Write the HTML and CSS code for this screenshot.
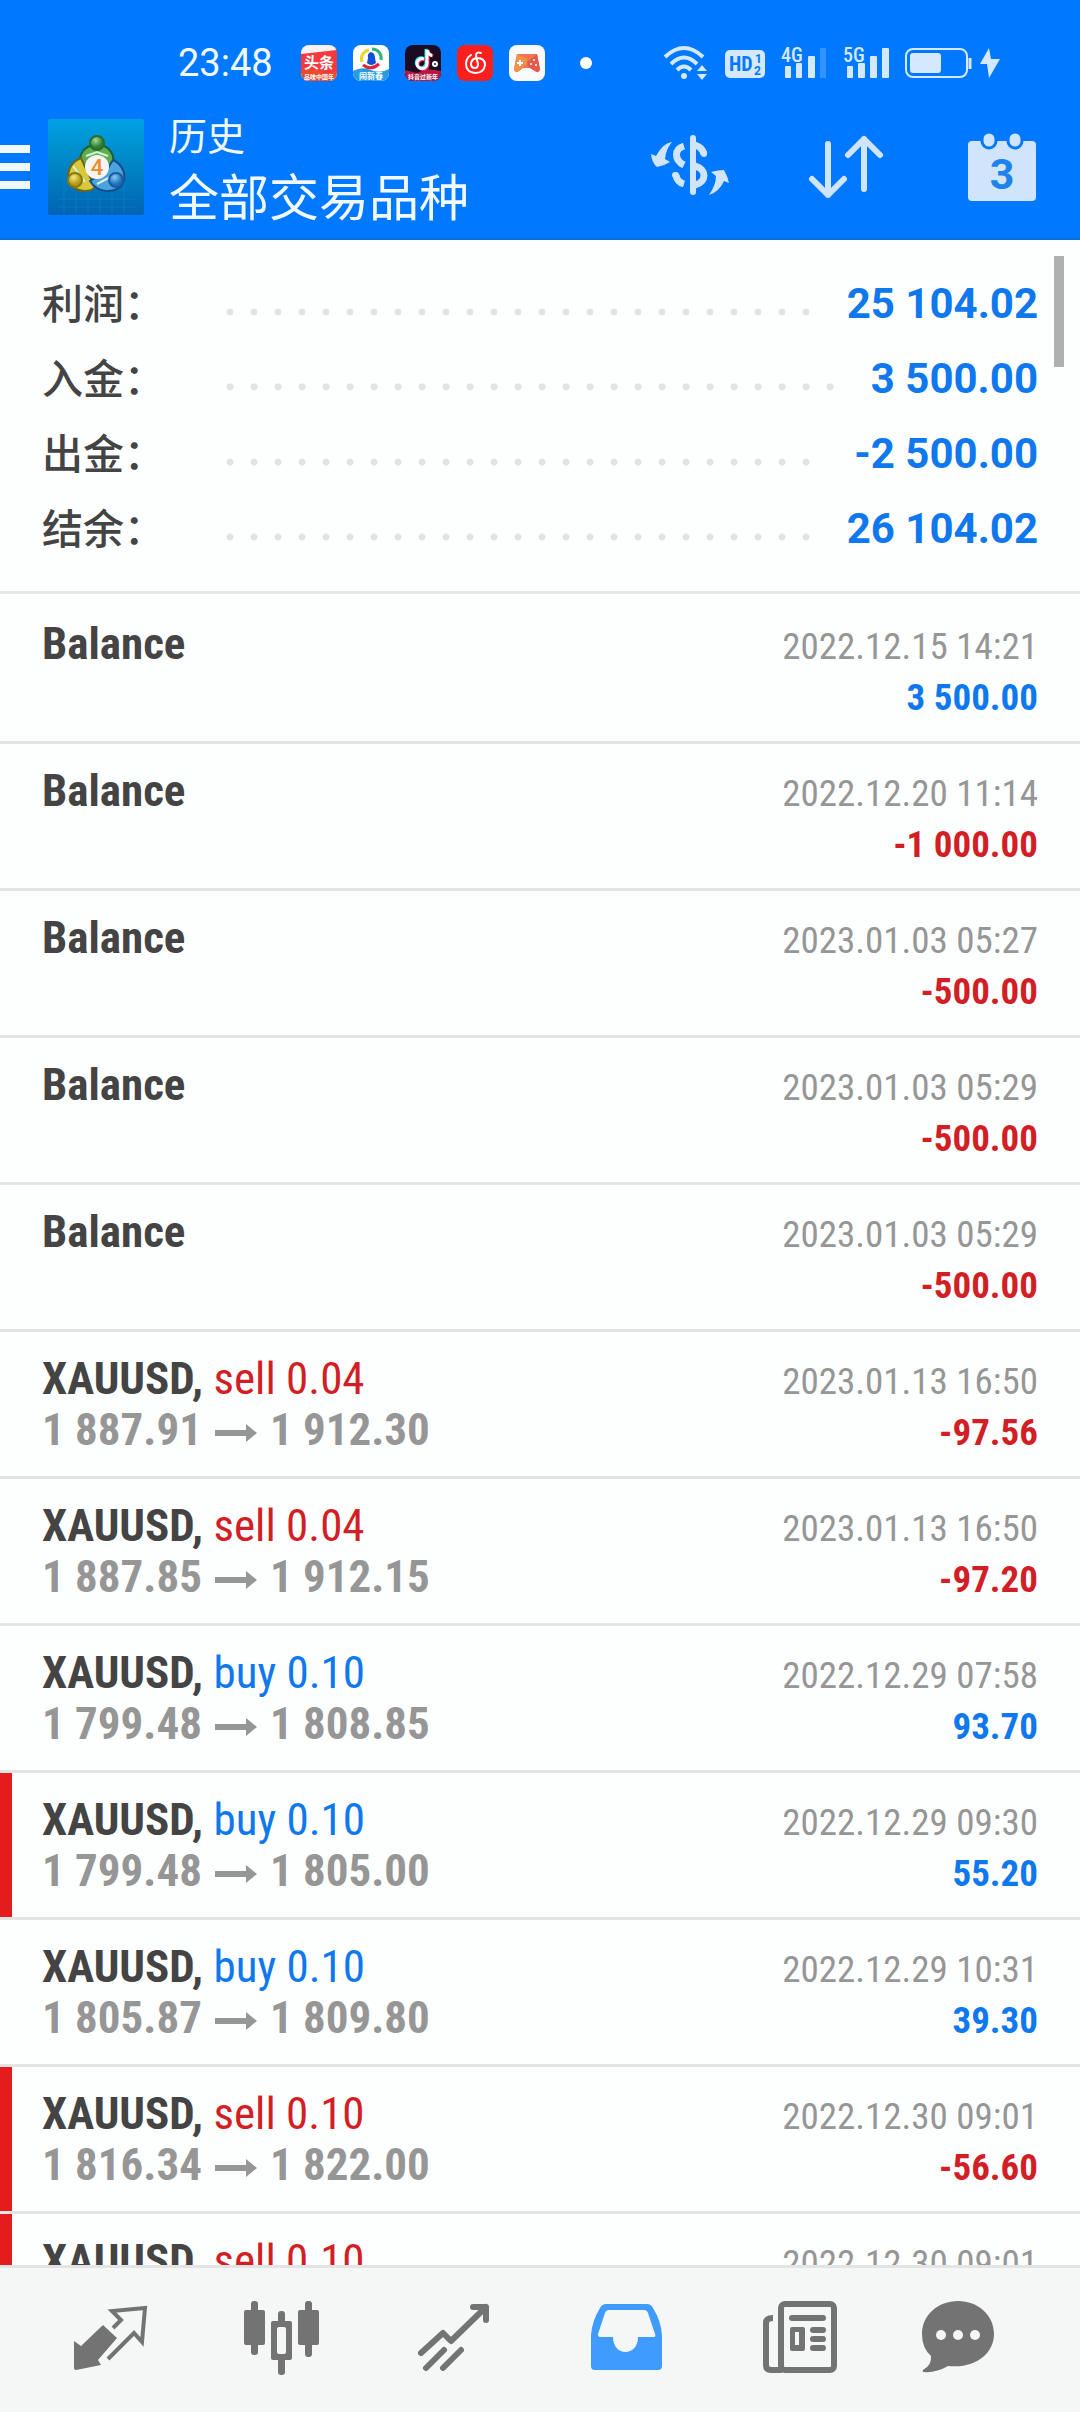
FILE: index.html
```html
<!DOCTYPE html>
<html lang="zh-CN">
<head>
<meta charset="utf-8">
<meta name="viewport" content="width=device-width, initial-scale=1">
<title>历史</title>
<link rel="stylesheet" href="styles.css">
</head>
<body>
<header class="top">
  <div class="status">
    <time class="clock">23:48</time>
    <div class="apps">
      <svg class="app" viewBox="0 0 36 36" aria-hidden="true"><rect width="36" height="36" rx="8" fill="#f8f2f4"/><path d="M0 9L36 5V28H0Z" fill="#f5393f"/><path d="M0 26Q9 22 18 26T36 26V28A8 8 0 0 1 28 36H8A8 8 0 0 1 0 28Z" fill="#ee4a2c"/><text x="18" y="23" class="app-name">头条</text><text x="18" y="34" class="app-note">品味中国年</text></svg>
      <svg class="app" viewBox="0 0 36 36" aria-hidden="true"><rect width="36" height="36" rx="8" fill="#fff"/><path d="M0 26Q9 21 18 25T36 24V28A8 8 0 0 1 28 36H8A8 8 0 0 1 0 28Z" fill="#2b9be0"/><g fill="none" stroke-width="3"><path d="M9 17A9 9 0 0 1 16 5" stroke="#e8d62c"/><path d="M19 4A9 9 0 0 1 28 15" stroke="#2fb67c"/><path d="M10 20Q18 26 26 19" stroke="#e0263c"/></g><path d="M18 7Q22 8 22 13L23 18Q18 22 14 18L15 13Q14 8 18 7Z" fill="#1151d8"/><text x="18" y="34" class="app-note app-note-big">闹新春</text></svg>
      <svg class="app" viewBox="0 0 36 36" aria-hidden="true"><rect width="36" height="36" rx="8" fill="#1b0c24"/><path d="M0 25L12 28 22 24 36 26V28A8 8 0 0 1 28 36H8A8 8 0 0 1 0 28Z" fill="#b51745"/><g fill="none" stroke-width="3"><path d="M18 13A5 5 0 1 0 21 19V4Q22 9 27 10" stroke="#28e6e4"/><path d="M20 15A5 5 0 1 0 23 20V5Q24 10 28 11" stroke="#f52f5a"/><path d="M19 14A5 5 0 1 0 22 19V5Q23 9 27 11" stroke="#fff"/></g><circle cx="30" cy="19" r="2" fill="none" stroke="#fff" stroke-width="2"/><text x="18" y="34" class="app-note">抖音过新年</text></svg>
      <svg class="app" viewBox="0 0 36 36" aria-hidden="true"><rect width="36" height="36" rx="8" fill="#fb201c"/><path d="M24 8Q19 6 19 11L21 19Q21 23 18 23 14 23 14 19 14 14 20 13 28 13 28 20 27 28 18 28 9 27 9 19 9 13 14 10" fill="none" stroke="#fff" stroke-width="2" stroke-linecap="round"/></svg>
      <svg class="app" viewBox="0 0 36 36" aria-hidden="true"><rect width="36" height="36" rx="8" fill="#fbfafc"/><path d="M8 9H28L31 24Q30 29 26 26L22 23H14L10 26Q6 29 5 24Z" fill="#ef7650"/><path d="M18 14L8 9 5 24Q6 29 10 26L18 18Z" fill="#f0924b"/><path d="M18 17L28 9 31 24Q30 29 26 26L19 22Z" fill="#e35a4b"/><path d="M11 15V21M8 18H14" stroke="#fff" stroke-width="2"/><g fill="#fff"><circle cx="25" cy="15" r="1"/><circle cx="22" cy="19" r="1"/><circle cx="27" cy="20" r="1"/></g></svg>
    </div>
    <span class="more"></span>
    <div class="system">
      <svg width="46" height="36" viewBox="0 0 46 36" aria-hidden="true"><g fill="none" stroke="#d4e9ff" stroke-width="4"><path d="M2 12Q21-6 40 12"/><path d="M8 19Q21 6 34 19"/><path d="M14 25Q21 18 28 25"/></g><circle cx="21" cy="31" r="3" fill="#d4e9ff"/><path d="M34 26L39 20 44 26ZM34 29H44L39 35Z" fill="#d4e9ff"/></svg>
      <svg width="40" height="36" viewBox="0 0 40 36" aria-hidden="true"><rect y="5" width="40" height="28" rx="5" fill="#d4e9ff"/><text x="4" y="26" class="hd">HD</text><text x="30" y="18" class="hd-small">1</text><text x="29" y="30" class="hd-small">2</text></svg>
      <svg width="46" height="36" viewBox="0 0 46 36" aria-hidden="true"><text x="0" y="17" class="net">4G</text><g fill="#d4e9ff"><rect x="4" y="21" width="6" height="12" rx="1"/><rect x="15" y="18" width="6" height="15" rx="1"/><rect x="27" y="11" width="7" height="22" rx="1"/></g><rect x="39" y="3" width="6" height="30" rx="1" fill="#3394ff"/></svg>
      <svg width="46" height="36" viewBox="0 0 46 36" aria-hidden="true"><text x="0" y="17" class="net">5G</text><g fill="#d4e9ff"><rect x="4" y="21" width="6" height="12" rx="1"/><rect x="15" y="18" width="7" height="15" rx="1"/><rect x="27" y="11" width="7" height="22" rx="1"/><rect x="39" y="3" width="7" height="30" rx="1"/></g></svg>
      <svg width="95" height="36" viewBox="0 0 95 36" aria-hidden="true"><rect x="1" y="4" width="61" height="28" rx="7" fill="none" stroke="#d4e9ff" stroke-width="2"/><rect x="5" y="8" width="31" height="20" rx="3" fill="#d4e9ff"/><path d="M65 13V24" stroke="#d4e9ff" stroke-width="3"/><path d="M84 3L75 19H82L84 33 95 14H86Z" fill="#d4e9ff"/></svg>
    </div>
  </div>
  <div class="bar">
    <button class="menu" aria-label="菜单"><svg width="30" height="44" viewBox="0 0 30 44"><path d="M0 4H30M0 22H30M0 40H30" stroke="#f2f8ff" stroke-width="8"/></svg></button>
    <svg class="logo" viewBox="0 0 96 96" role="img" aria-label="MetaTrader 4">
      <defs>
        <linearGradient id="sky" x1="0" y1="0" x2="0" y2="1"><stop offset="0" stop-color="#00a2e4"/><stop offset=".5" stop-color="#0084c4"/><stop offset="1" stop-color="#0063b4"/></linearGradient>
        <radialGradient id="green" cx=".4" cy=".3"><stop offset="0" stop-color="#a5dc92"/><stop offset="1" stop-color="#2c7d34"/></radialGradient>
        <radialGradient id="gold" cx=".4" cy=".3"><stop offset="0" stop-color="#f6ea7c"/><stop offset="1" stop-color="#b59a16"/></radialGradient>
        <radialGradient id="blue" cx=".4" cy=".3"><stop offset="0" stop-color="#8ccaf5"/><stop offset="1" stop-color="#1d72bd"/></radialGradient>
      </defs>
      <rect width="96" height="96" rx="2" fill="url(#sky)"/>
      <path d="M16 60V94M28 70V94M40 76V94M52 76V94M64 72V94M76 60V94M10 80H88M10 88H88" stroke="#2c93d2" stroke-width="1" opacity=".3"/>
      <g stroke-width="2">
        <path d="M33 50C29 34 37 26 49 26S69 36 64 50L49 56Z" fill="#5cae50" stroke="#235f2a"/>
        <path d="M33 39C20 44 18 56 23 66 30 74 43 73 47 68L38 50Z" fill="#d8c93c" stroke="#73650f"/>
        <path d="M65 41C76 46 79 58 74 66 66 75 49 74 42 62L58 52Z" fill="#4ba3df" stroke="#134f8b"/>
        <path d="M38 37L49 33 60 37M25 47L37 63M49 65L66 56" stroke="#d7f0da" fill="none"/>
        <circle cx="49" cy="24" r="7" fill="url(#green)" stroke="#2a6c2e"/>
        <circle cx="27" cy="61" r="7" fill="url(#gold)" stroke="#8a7712"/>
        <circle cx="68" cy="61" r="7" fill="url(#blue)" stroke="#1a5c9c"/>
      </g>
      <circle cx="49" cy="48" r="12" fill="#f5f5f4"/>
      <text x="49" y="56" class="logo-four">4</text>
    </svg>
    <div class="titles"><p class="section">历史</p><h1 class="scope">全部交易品种</h1></div>
    <div class="actions">
      <button class="action" aria-label="货币"><svg viewBox="0 0 84 84"><g fill="none" stroke="#d0e5fb"><path d="M45 13V67" stroke-width="6" stroke-linecap="round"/><path d="M36 21C26 24 26 35 36 40M28 50Q29 57 36 59M47 20Q54 22 56 29M47 41C59 44 59 57 47 60" stroke-width="7"/><path d="M27 50H28M56 28V29" stroke-width="6" stroke-linecap="round"/></g><path d="M24 17Q15 18 8 31L3 29Q4 38 9 42 16 41 22 37L17 34Q18 24 24 17ZM61 70Q68 60 68 51L63 47Q70 45 76 45 80 52 81 58L76 56Q71 67 61 70Z" fill="#d0e5fb"/></svg></button>
      <button class="action" aria-label="排序"><svg viewBox="0 0 84 84"><path d="M24 19V70M8 54L24 70 40 54M60 64V14M44 30L60 14 76 30" fill="none" stroke="#d0e5fb" stroke-width="6" stroke-linecap="round" stroke-linejoin="round"/></svg></button>
      <button class="action" aria-label="选择期间"><svg viewBox="0 0 84 84"><rect x="8" y="16" width="68" height="60" rx="4" fill="#d0e5fb"/><g fill="#d0e5fb" stroke="#0078ff" stroke-width="3"><path d="M22 16V14A7 7 0 0 1 36 14V16A7 7 0 0 1 22 16ZM48 16V14A7 7 0 0 1 62 14V16A7 7 0 0 1 48 16Z"/></g><text x="42" y="64" class="cal-day">3</text></svg></button>
    </div>
  </div>
</header>

<main class="content">
  <dl class="summary">
    <div class="sum"><dt>利润：</dt><dd>25 104.02</dd></div>
    <div class="sum"><dt>入金：</dt><dd>3 500.00</dd></div>
    <div class="sum"><dt>出金：</dt><dd>-2 500.00</dd></div>
    <div class="sum"><dt>结余：</dt><dd>26 104.02</dd></div>
  </dl>
  <ul class="deals" id="deals"></ul>
  <span class="thumb"></span>
</main>

<nav class="tabs">
  <a href="#quotes" class="tab" aria-label="行情"><svg viewBox="0 0 96 96"><path d="M41 33L55 46 36 68 39 73 14 78Q12 78 12 76V49L19 54Z" fill="currentColor"/><path d="M51 36L59 28 50 19 83 16 80 50 72 41 46 67" fill="none" stroke="currentColor" stroke-width="4"/></svg></a>
  <a href="#chart" class="tab" aria-label="图表"><svg viewBox="0 0 96 96"><g fill="currentColor"><rect x="10" y="18" width="21" height="35" rx="2"/><rect x="17" y="9" width="7" height="54" rx="3"/><rect x="64" y="18" width="21" height="35" rx="2"/><rect x="71" y="9" width="7" height="56" rx="3"/><rect x="44" y="19" width="7" height="64" rx="3"/><rect x="37" y="29" width="21" height="39" rx="2"/></g><rect x="43" y="35" width="9" height="27" rx="2" fill="#f5f6f6"/></svg></a>
  <a href="#trade" class="tab" aria-label="交易"><svg viewBox="0 0 96 96"><path d="M15 61L37 41 45 49 80 15M67 15H80V28M38 58L20 76M55 58L37 76" fill="none" stroke="currentColor" stroke-width="6" stroke-linecap="round" stroke-linejoin="round"/></svg></a>
  <a href="#history" class="tab tab-on" aria-label="历史" aria-current="page"><svg viewBox="0 0 96 96"><path fill-rule="evenodd" fill="currentColor" d="M30 12H69Q73 12 75 16 83 29 84 43V74Q84 78 80 78H17Q13 78 13 74V43Q14 29 22 16 24 12 28 12ZM31 18Q28 18 27 21L20 42Q20 45 22 45H35C35 65 60 65 60 45H76Q78 45 77 42L70 21Q69 18 66 18Z"/></svg></a>
  <a href="#news" class="tab" aria-label="新闻"><svg viewBox="0 0 96 96"><g fill="none" stroke="currentColor" stroke-width="6"><rect x="31" y="12" width="53" height="66" rx="4"/><path d="M23 26Q16 26 16 31V73Q16 78 21 78H32"/></g><path d="M42 26H73M63 38H73M63 47H73M63 56H73" stroke="currentColor" stroke-width="6" stroke-linecap="round"/><path fill-rule="evenodd" fill="currentColor" d="M42 35H53Q55 35 55 37V57Q55 59 53 59H42Q40 59 40 57V37Q40 35 42 35ZM45 40V53H49V40Z"/></svg></a>
  <a href="#chat" class="tab" aria-label="信息"><svg viewBox="0 0 96 96"><path d="M36 9C56 9 72 23 72 42S54 77 26 74Q14 81 2 80 0 80 1 78 10 73 9 64 0 56 0 42C0 23 16 9 36 9Z" fill="currentColor"/><g fill="#f5f6f6"><circle cx="19" cy="43" r="5"/><circle cx="36" cy="43" r="5"/><circle cx="53" cy="43" r="5"/></g></svg></a>
</nav>
<script src="deals.js"></script>
</body>
</html>
```
FILE: styles.css
```css
* { box-sizing: border-box; }

body {
  margin: 0;
  height: 100vh;
  display: flex;
  flex-direction: column;
  overflow: hidden;
  background: #fdfefe;
  color: #444;
  font-family: Roboto, "Noto Sans CJK SC", sans-serif;
}

p, h1, dl, dd, ul { margin: 0; padding: 0; }
button { border: 0; padding: 0; background: none; }
svg { display: block; flex: none; overflow: visible; }

/* Header */
.top {
  flex: none;
  background: #0078ff;
  border-bottom: 2px solid #0a6edc;
  color: #f2f8ff;
}

.status {
  display: flex;
  align-items: center;
  height: 96px;
  padding: 30px 80px 0 178px;
}

.clock { width: 123px; font-size: 38px; }
.apps { display: flex; gap: 16px; }
.app { width: 36px; height: 36px; }
.app-name { font: 700 15px "Noto Sans CJK SC", sans-serif; fill: #fff; text-anchor: middle; }
.app-note { font: 700 6px "Noto Sans CJK SC", sans-serif; fill: #fff; text-anchor: middle; }
.app-note-big { font-size: 8px; }
.more { width: 12px; height: 12px; margin-left: 35px; border-radius: 50%; background: #fff; }
.system { display: flex; gap: 16px; margin-left: auto; }
.hd { font: 700 20px "Roboto Condensed", Roboto, sans-serif; fill: #0078ff; }
.hd-small { font: 700 12px Roboto, sans-serif; fill: #0078ff; }
.net { font: 500 20px "Roboto Condensed", Roboto, sans-serif; fill: #d4e9ff; }

.bar { display: flex; align-items: center; height: 142px; padding-right: 36px; }
.menu { margin-right: 18px; }
.logo { width: 96px; height: 96px; }
.logo-four { font: 500 22px Roboto, sans-serif; fill: #f08a2c; text-anchor: middle; }
.titles { margin-left: 25px; font-family: "Noto Sans CJK SC", sans-serif; }
.section { font-size: 38px; line-height: 54px; }
.scope { font-size: 50px; line-height: 66px; font-weight: 400; }
.actions { display: flex; gap: 72px; margin-left: auto; }
.action { width: 84px; height: 84px; }
.cal-day { font: 700 43px Roboto, sans-serif; fill: #1f83ee; text-anchor: middle; }

/* Totals */
.content { position: relative; flex: 1; min-height: 0; overflow: hidden; }

.summary {
  padding: 26px 42px 25px;
  border-bottom: 3px solid #e5e6e6;
}

.sum { display: flex; align-items: center; font-size: 42px; line-height: 75px; }
.sum dt {
  width: 184px;
  padding-bottom: 4px;
  font-family: "Noto Sans CJK SC", sans-serif;
  font-size: 41px;
  font-weight: 500;
  line-height: 71px;
}
.sum dd { order: 2; color: #0f78ee; font-weight: 700; }

.sum::before {
  content: "";
  order: 1;
  flex: 1;
  height: 8px;
  margin: 16px 34px 0 0;
  background: radial-gradient(circle at 4px 4px, #e3e3e3 3px, transparent 4px) 0 0 / 24px 8px repeat-x;
}

.thumb {
  position: absolute;
  top: 16px;
  right: 16px;
  width: 10px;
  height: 111px;
  background: #b0b0b0;
}

/* Deals */
.deals { padding-top: 3px; list-style: none; font-family: "Roboto Condensed", Roboto, sans-serif; }
.deal { padding: 21px 42px; border-bottom: 3px solid #e4e4e4; }
.deal-closed { box-shadow: inset 12px 0 #e31d1e; }
.line { display: flex; align-items: baseline; height: 51px; font-size: 45px; line-height: 51px; }
/* Zero-width strut: keeps the baseline when the left side is empty */
.line::before { content: "\200b"; }
.symbol, .prices { font-weight: 700; }
.side { font-weight: 400; }
.prices { display: flex; color: #969696; }
.arrow { width: 42px; height: 18px; margin: 20px 13px 0; }
.date, .amount { margin-left: auto; font-size: 37px; line-height: 45px; }
.date { color: #969696; }
.amount { font-weight: 700; }
.up { color: #0f78ee; }
.down { color: #d21f26; }

/* Tabs */
.tabs {
  flex: none;
  display: flex;
  padding: 24px;
  border-top: 3px solid #e4e4e4;
  background: #f5f6f6;
}
.tab { flex: 1; display: flex; justify-content: center; color: #737373; }
.tab svg { width: 96px; height: 96px; }
.tab-on { color: #409bff; }
```
FILE: deals.js
```js
const deals = [
  { date: "2022.12.15 14:21", amount: "3 500.00" },
  { date: "2022.12.20 11:14", amount: "-1 000.00" },
  { date: "2023.01.03 05:27", amount: "-500.00" },
  { date: "2023.01.03 05:29", amount: "-500.00" },
  { date: "2023.01.03 05:29", amount: "-500.00" },
  { side: "sell 0.04", open: "1 887.91", close: "1 912.30", date: "2023.01.13 16:50", amount: "-97.56" },
  { side: "sell 0.04", open: "1 887.85", close: "1 912.15", date: "2023.01.13 16:50", amount: "-97.20" },
  { side: "buy 0.10", open: "1 799.48", close: "1 808.85", date: "2022.12.29 07:58", amount: "93.70" },
  { side: "buy 0.10", open: "1 799.48", close: "1 805.00", date: "2022.12.29 09:30", amount: "55.20", marked: true },
  { side: "buy 0.10", open: "1 805.87", close: "1 809.80", date: "2022.12.29 10:31", amount: "39.30" },
  { side: "sell 0.10", open: "1 816.34", close: "1 822.00", date: "2022.12.30 09:01", amount: "-56.60", marked: true },
  { side: "sell 0.10", open: "1 816.34", close: "1 822.00", date: "2022.12.30 09:01", amount: "-56.60", marked: true }
];

const arrow = '<svg class="arrow" viewBox="0 0 42 18" aria-label="→"><path d="M0 6H31V0L42 9 31 18V12H0Z" fill="currentColor"/></svg>';

document.getElementById("deals").innerHTML = deals.map(d => {
  const title = d.side
    ? `XAUUSD, <span class="side ${d.side.startsWith("buy") ? "up" : "down"}">${d.side}</span>`
    : "Balance";
  const prices = d.side ? `<span class="prices">${d.open}${arrow}${d.close}</span>` : "";
  const trend = d.amount.startsWith("-") ? "down" : "up";
  return `<li class="deal${d.marked ? " deal-closed" : ""}">
    <div class="line"><span class="symbol">${title}</span><time class="date">${d.date}</time></div>
    <div class="line">${prices}<span class="amount ${trend}">${d.amount}</span></div>
  </li>`;
}).join("");
```
